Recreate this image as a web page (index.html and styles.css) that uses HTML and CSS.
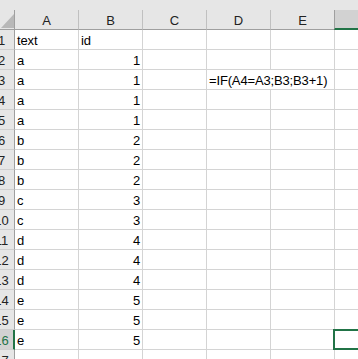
FILE: index.html
```
<!DOCTYPE html>
<html>
<head>
<meta charset="utf-8">
<link rel="stylesheet" href="styles.css">
</head>
<body>
<div class="topstrip"></div>
<div class="sheet">
  <div class="corner"><svg width="13" height="14" viewBox="0 0 13 14"><polygon points="0,14 13,0 13,14" fill="#b8b8b8"/></svg></div>
  <div class="ch">A</div><div class="ch">B</div><div class="ch">C</div><div class="ch">D</div><div class="ch">E</div><div class="ch sel">&nbsp;</div>

  <div class="rh">1</div><div class="c">text</div><div class="c">id</div><div class="c"></div><div class="c"></div><div class="c"></div><div class="c"></div>
  <div class="rh">2</div><div class="c">a</div><div class="c n">1</div><div class="c"></div><div class="c"></div><div class="c"></div><div class="c"></div>
  <div class="rh">3</div><div class="c">a</div><div class="c n">1</div><div class="c"></div><div class="c span2">=IF(A4=A3;B3;B3+1)</div><div class="c"></div>
  <div class="rh">4</div><div class="c">a</div><div class="c n">1</div><div class="c"></div><div class="c"></div><div class="c"></div><div class="c"></div>
  <div class="rh">5</div><div class="c">a</div><div class="c n">1</div><div class="c"></div><div class="c"></div><div class="c"></div><div class="c"></div>
  <div class="rh">6</div><div class="c">b</div><div class="c n">2</div><div class="c"></div><div class="c"></div><div class="c"></div><div class="c"></div>
  <div class="rh">7</div><div class="c">b</div><div class="c n">2</div><div class="c"></div><div class="c"></div><div class="c"></div><div class="c"></div>
  <div class="rh">8</div><div class="c">b</div><div class="c n">2</div><div class="c"></div><div class="c"></div><div class="c"></div><div class="c"></div>
  <div class="rh">9</div><div class="c">c</div><div class="c n">3</div><div class="c"></div><div class="c"></div><div class="c"></div><div class="c"></div>
  <div class="rh">10</div><div class="c">c</div><div class="c n">3</div><div class="c"></div><div class="c"></div><div class="c"></div><div class="c"></div>
  <div class="rh">11</div><div class="c">d</div><div class="c n">4</div><div class="c"></div><div class="c"></div><div class="c"></div><div class="c"></div>
  <div class="rh">12</div><div class="c">d</div><div class="c n">4</div><div class="c"></div><div class="c"></div><div class="c"></div><div class="c"></div>
  <div class="rh">13</div><div class="c">d</div><div class="c n">4</div><div class="c"></div><div class="c"></div><div class="c"></div><div class="c"></div>
  <div class="rh">14</div><div class="c">e</div><div class="c n">5</div><div class="c"></div><div class="c"></div><div class="c"></div><div class="c"></div>
  <div class="rh">15</div><div class="c">e</div><div class="c n">5</div><div class="c"></div><div class="c"></div><div class="c"></div><div class="c"></div>
  <div class="rh selrow">16</div><div class="c">e</div><div class="c n">5</div><div class="c"></div><div class="c"></div><div class="c"></div><div class="c active"><div class="selbox"></div></div>
  <div class="rh">17</div><div class="c"></div><div class="c"></div><div class="c"></div><div class="c"></div><div class="c"></div><div class="c"></div>
</div>
</body>
</html>
```
FILE: styles.css
```
html, body {
  margin: 0;
  padding: 0;
  background: #ffffff;
  overflow: hidden;
  width: 358px;
  height: 359px;
}
body {
  font-family: "Liberation Sans", Arial, sans-serif;
  font-size: 13px;
  color: #000;
}
.topstrip {
  height: 10px;
  background: #e6e6e6;
}
.sheet {
  display: grid;
  grid-template-columns: 26px 64px 64px 64px 64px 64px 64px;
  grid-auto-rows: 20px;
  margin-left: -11px;
  width: 410px;
}
.sheet > div {
  box-sizing: border-box;
  height: 20px;
  padding-top: 1px;
  line-height: 19px;
  overflow: hidden;
  white-space: nowrap;
}
.corner {
  background: #e6e6e6;
  border-right: 1px solid #9f9f9f;
  border-bottom: 1px solid #9f9f9f;
  display: flex;
  justify-content: flex-end;
  align-items: flex-end;
}
.corner svg {
  display: block;
  margin-bottom: 1px;
}
.ch {
  background: #e6e6e6;
  border-right: 1px solid #c0c0c0;
  border-bottom: 1px solid #9f9f9f;
  text-align: center;
  color: #222;
}
.ch.sel {
  background: #d2d2d2;
  border-left: 1px solid #9f9f9f;
  margin-left: -1px;
  border-bottom: 2px solid #217346;
}
.rh {
  background: #e6e6e6;
  border-right: 1px solid #9f9f9f;
  border-bottom: 1px solid #cfcfcf;
  text-align: center;
  color: #222;
}
.rh.selrow {
  background: #d2d2d2;
  border-right: 2px solid #217346;
  color: #217346;
  padding-left: 1px;
}
.c {
  border-right: 1px solid #d4d4d4;
  border-bottom: 1px solid #d4d4d4;
  padding-left: 2px;
  padding-right: 2px;
  letter-spacing: -0.15px;
}
.c.n {
  text-align: right;
}
.c.span2 {
  grid-column: span 2;
}
.c.active {
  position: relative;
  overflow: visible;
}
.selbox {
  position: absolute;
  left: -2px;
  top: -1px;
  width: 80px;
  height: 21px;
  box-sizing: border-box;
  border: 2px solid #217346;
}
```
